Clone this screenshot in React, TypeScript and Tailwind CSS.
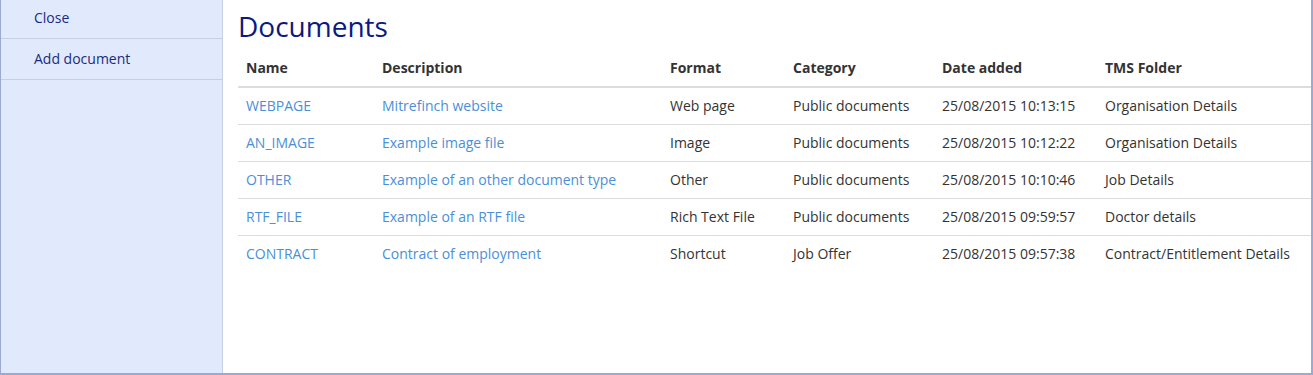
import React from "react";

type DocumentRow = {
  name: string;
  description: string;
  format: string;
  category: string;
  dateAdded: string;
  folder: string;
};

const documents: DocumentRow[] = [
  {
    name: "WEBPAGE",
    description: "Mitrefinch website",
    format: "Web page",
    category: "Public documents",
    dateAdded: "25/08/2015 10:13:15",
    folder: "Organisation Details",
  },
  {
    name: "AN_IMAGE",
    description: "Example image file",
    format: "Image",
    category: "Public documents",
    dateAdded: "25/08/2015 10:12:22",
    folder: "Organisation Details",
  },
  {
    name: "OTHER",
    description: "Example of an other document type",
    format: "Other",
    category: "Public documents",
    dateAdded: "25/08/2015 10:10:46",
    folder: "Job Details",
  },
  {
    name: "RTF_FILE",
    description: "Example of an RTF file",
    format: "Rich Text File",
    category: "Public documents",
    dateAdded: "25/08/2015 09:59:57",
    folder: "Doctor details",
  },
  {
    name: "CONTRACT",
    description: "Contract of employment",
    format: "Shortcut",
    category: "Job Offer",
    dateAdded: "25/08/2015 09:57:38",
    folder: "Contract/Entitlement Details",
  },
];

const Sidebar = () => (
  <nav className="flex w-[222px] shrink-0 flex-col border-r border-[#c7cfe3] bg-[#e1eafc]">
    <a className="flex h-[39px] items-center border-b border-[#c7cfe3] pb-[4px] pl-[33px] text-[#1b2a80]">Close</a>
    <a className="flex h-[41px] items-center border-b border-[#c7cfe3] pb-[2px] pl-[33px] text-[#1b2a80]">Add document</a>
  </nav>
);

const DocumentsTable = () => (
  <table className="w-full table-fixed border-collapse text-left">
    <colgroup>
      <col className="w-[136px]" />
      <col className="w-[288px]" />
      <col className="w-[123px]" />
      <col className="w-[149px]" />
      <col className="w-[163px]" />
      <col />
    </colgroup>
    <thead>
      <tr className="h-[39px] border-b-2 border-[#dddddd]">
        {["Name", "Description", "Format", "Category", "Date added", "TMS Folder"].map((label) => (
          <th key={label} className="px-2 font-bold text-[#333333]">
            {label}
          </th>
        ))}
      </tr>
    </thead>
    <tbody>
      {documents.map((doc, i) => (
        <tr
          key={doc.name}
          className={i < documents.length - 1 ? "h-[37px] border-b border-[#dddddd]" : "h-[37px]"}
        >
          <td className="px-2 text-[#4a8fd8]">{doc.name}</td>
          <td className="px-2 text-[#4a8fd8]">{doc.description}</td>
          <td className="px-2 text-[#333333]">{doc.format}</td>
          <td className="px-2 text-[#333333]">{doc.category}</td>
          <td className="px-2 text-[#333333]">{doc.dateAdded}</td>
          <td className="whitespace-nowrap px-2 text-[#333333]">{doc.folder}</td>
        </tr>
      ))}
    </tbody>
  </table>
);

export default function App() {
  return (
    <div
      className="flex h-[375px] w-[1313px] border-b-2 border-l border-r-2 border-[#9aaad4] bg-white text-[14px]"
      style={{ fontFamily: '"Open Sans", sans-serif' }}
    >
      <Sidebar />
      <main className="flex-1 pl-[15px]">
        <h1 className="mb-[2px] pt-[6px] text-[28px] leading-[40px] text-[#0b1a80]">Documents</h1>
        <DocumentsTable />
      </main>
    </div>
  );
}
